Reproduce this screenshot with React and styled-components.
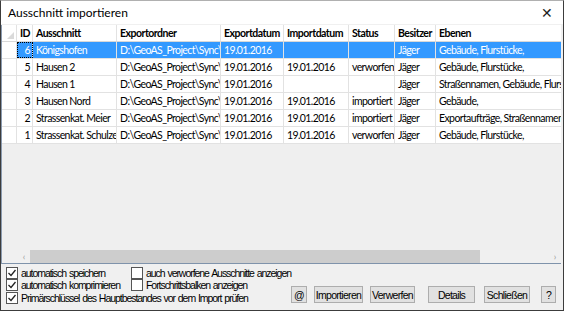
import React from "react";
import styled, { createGlobalStyle } from "styled-components";

const Global = createGlobalStyle`
  html, body { margin: 0; padding: 0; background: #f0f0f0; }
  * { box-sizing: border-box; }
`;

const COLS = "15px 16px 84px 104px 63px 65px 46px 41px 126px";

const Window = styled.div`
  width: 564px;
  height: 311px;
  border: 1px solid #3c3c3c;
  border-top-color: #b0b0b0;
  background: #f0f0f0;
  display: flex;
  flex-direction: column;
  font-family: Lato, "Open Sans", sans-serif;
  overflow: hidden;
`;

const TitleBar = styled.div`
  height: 23px;
  flex: none;
  background: #ffffff;
  display: flex;
  align-items: center;
  justify-content: space-between;
  padding: 0 8px 0 7px;
  font-size: 12px;
  color: #000;
`;

const Close = styled.span`
  font-family: "DejaVu Sans", sans-serif;
  font-size: 14px;
  font-weight: 300;
  margin-right: 2px;
  color: #222;
`;

const Grid = styled.div`
  margin: 1px 2px 0 0;
  height: 239px;
  flex: none;
  border-left: 1px solid #8b9bb0;
  border-bottom: 1px solid #7f93ab;
  display: flex;
  flex-direction: column;
  background: #efefef;
  overflow: hidden;
`;

const Row = styled.div`
  display: grid;
  grid-template-columns: ${COLS};
  height: 17px;
  flex: none;
  font-size: 10.5px;
  letter-spacing: ${(p) => (p.$head ? "-0.5px" : "-0.6px")};
  font-weight: ${(p) => (p.$head ? 700 : 400)};
  background: ${(p) => (p.$sel ? "#3399ff" : "#ffffff")};
  color: ${(p) => (p.$sel ? "#ffffff" : "#000")};
  border-bottom: 1px solid ${(p) => (p.$head ? "#d8d8d8" : "#e2e2e2")};
`;

const Cell = styled.div`
  padding: 0 2px 0 3px;
  border-right: 1px solid #e2e2e2;
  white-space: nowrap;
  overflow: hidden;
  line-height: 16px;
  text-align: ${(p) => (p.$right ? "right" : "left")};
  outline: ${(p) => (p.$focus ? "1px dotted #000" : "none")};
  outline-offset: -1px;
`;

const RowHead = styled.div`
  background: #fff;
  border-right: 1px solid #e2e2e2;
  position: relative;
`;

const Tri = styled.span`
  position: absolute;
  right: 2px;
  bottom: 2px;
  width: 0;
  height: 0;
  border-left: 7px solid transparent;
  border-bottom: 7px solid #dadada;
`;

const Fill = styled.div`
  flex: 1;
`;

const HScroll = styled.div`
  height: 13px;
  flex: none;
  display: flex;
  align-items: center;
  background: #f0f0f0;
  padding-left: 16px;
`;

const Arrow = styled.span`
  width: 12px;
  font-size: 9px;
  color: #9a9a9a;
  text-align: center;
  line-height: 13px;
`;

const Track = styled.div`
  flex: 1;
  height: 13px;
`;

const Thumb = styled.div`
  height: 13px;
  width: 450px;
  background: #cdcdcd;
`;

const Bottom = styled.div`
  flex: 1;
  display: flex;
  align-items: flex-end;
  padding: 0 8px 6px 5px;
`;

const Checks = styled.div`
  display: grid;
  grid-template-columns: 125px auto;
  font-family: "Liberation Sans", Arial, sans-serif;
  font-size: 10.5px;
  letter-spacing: -1.05px;
  word-spacing: 1px;
  color: #000;
`;

const Check = styled.label`
  display: flex;
  align-items: center;
  height: 12.5px;
  white-space: nowrap;
  grid-column: ${(p) => (p.$wide ? "1 / span 2" : "auto")};
`;

const Box = styled.span`
  width: 12px;
  height: 12px;
  border: 1px solid #555;
  background: #fff;
  margin-right: 3px;
  display: inline-flex;
  align-items: center;
  justify-content: center;
  flex: none;
`;

const Buttons = styled.div`
  margin-left: auto;
  display: flex;
  gap: 7px;
  margin-bottom: 1px;
`;

const Button = styled.button`
  height: 17px;
  width: ${(p) => p.$w}px;
  margin-left: ${(p) => p.$ml || 0}px;
  padding: 0;
  background: #e1e1e1;
  border: 1px solid #adadad;
  font-family: "Liberation Sans", Arial, sans-serif;
  font-size: 10.5px;
  letter-spacing: -0.7px;
  color: #000;
`;

const Tick = () => (
  <svg width="10" height="10" viewBox="0 0 10 10">
    <path d="M1.5 5 L4 7.5 L8.5 2" fill="none" stroke="#222" strokeWidth="1.3" />
  </svg>
);

const cols = [
  { k: "id", t: "ID", r: true },
  { k: "a", t: "Ausschnitt" },
  { k: "o", t: "Exportordner" },
  { k: "e", t: "Exportdatum" },
  { k: "i", t: "Importdatum" },
  { k: "s", t: "Status" },
  { k: "b", t: "Besitzer" },
  { k: "l", t: "Ebenen" },
];

const dir = "D:\\GeoAS_Project\\Sync\\";
const rows = [
  { id: 6, a: "Königshofen", o: dir, e: "19.01.2016", i: "", s: "", b: "Jäger", l: "Gebäude, Flurstücke," },
  { id: 5, a: "Hausen 2", o: dir, e: "19.01.2016", i: "19.01.2016", s: "verworfen", b: "Jäger", l: "Gebäude, Flurstücke," },
  { id: 4, a: "Hausen 1", o: dir, e: "19.01.2016", i: "", s: "", b: "Jäger", l: "Straßennamen, Gebäude, Flurstücke," },
  { id: 3, a: "Hausen Nord", o: dir, e: "19.01.2016", i: "19.01.2016", s: "importiert", b: "Jäger", l: "Gebäude," },
  { id: 2, a: "Strassenkat. Meier", o: dir, e: "19.01.2016", i: "19.01.2016", s: "importiert", b: "Jäger", l: "Exportaufträge, Straßennamen," },
  { id: 1, a: "Strassenkat. Schulze", o: dir, e: "19.01.2016", i: "19.01.2016", s: "verworfen", b: "Jäger", l: "Gebäude, Flurstücke," },
];

export default function App() {
  return (
    <>
      <Global />
      <Window>
        <TitleBar>
          <span>Ausschnitt importieren</span>
          <Close>✕</Close>
        </TitleBar>
        <Grid>
          <Row $head>
            <RowHead>
              <Tri />
            </RowHead>
            {cols.map((c) => (
              <Cell key={c.k} $right={c.r}>
                {c.t}
              </Cell>
            ))}
          </Row>
          {rows.map((r, n) => (
            <Row key={r.id} $sel={n === 0}>
              <RowHead />
              {cols.map((c) => (
                <Cell key={c.k} $right={c.r} $focus={n === 0 && c.k === "id"}>
                  {r[c.k]}
                </Cell>
              ))}
            </Row>
          ))}
          <Fill />
          <HScroll>
            <Arrow>‹</Arrow>
            <Track>
              <Thumb />
            </Track>
            <Arrow>›</Arrow>
          </HScroll>
        </Grid>
        <Bottom>
          <Checks>
            <Check>
              <Box>
                <Tick />
              </Box>
              automatisch speichern
            </Check>
            <Check>
              <Box />
              auch verworfene Ausschnitte anzeigen
            </Check>
            <Check>
              <Box>
                <Tick />
              </Box>
              automatisch komprimieren
            </Check>
            <Check>
              <Box />
              Fortschrittsbalken anzeigen
            </Check>
            <Check $wide>
              <Box>
                <Tick />
              </Box>
              Primärschlüssel des Hauptbestandes vor dem Import prüfen
            </Check>
          </Checks>
          <Buttons>
            <Button $w={16}>@</Button>
            <Button $w={49}>Importieren</Button>
            <Button $w={45}>Verwerfen</Button>
            <Button $w={47} $ml={6}>Details</Button>
            <Button $w={46} $ml={2}>Schließen</Button>
            <Button $w={15} $ml={4}>?</Button>
          </Buttons>
        </Bottom>
      </Window>
    </>
  );
}
